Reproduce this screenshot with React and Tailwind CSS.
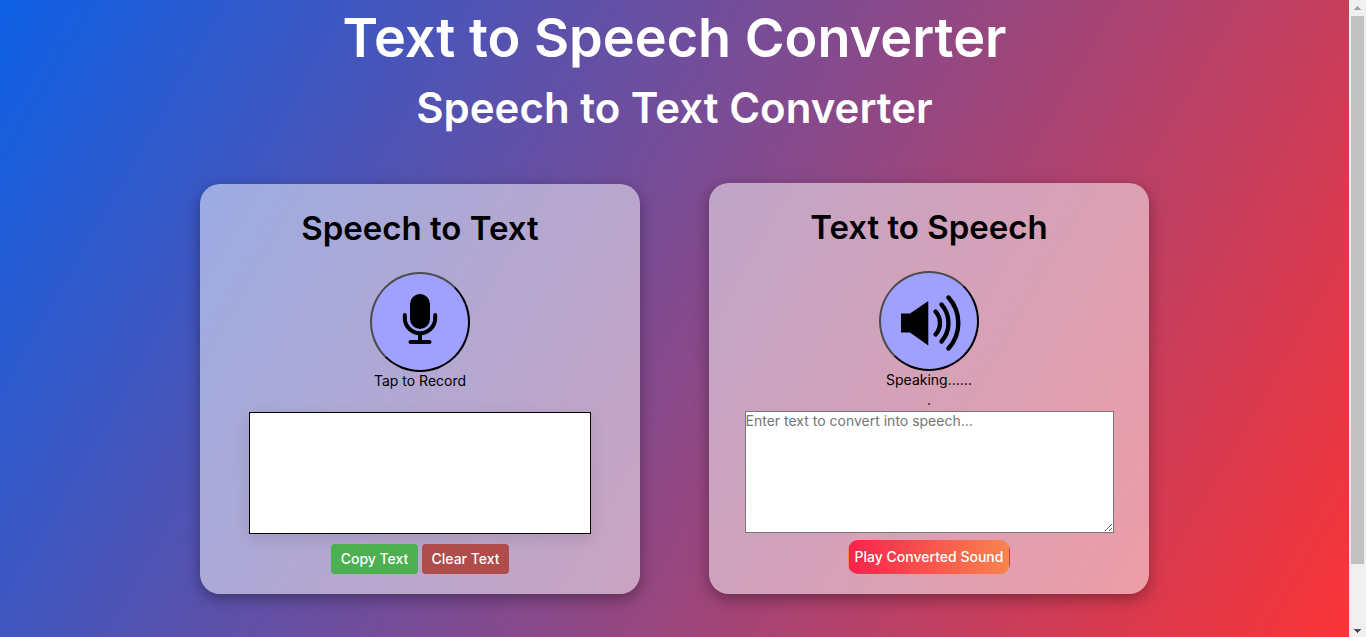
import React from "react";

function MicIcon() {
  return (
    <svg viewBox="0 0 36 52" className="h-[52px] w-9" fill="none" stroke="#000" strokeLinecap="round" aria-hidden="true">
      <rect x="8" y="1" width="20" height="35" rx="10" fill="#000" stroke="none" />
      <path d="M2.800 22v3a15.200 15.200 0 0 0 30.400 0v-3" strokeWidth="4" />
      <path d="M18 41v8" strokeWidth="4" strokeLinecap="butt" />
      <path d="M8.500 49h19" strokeWidth="4" />
    </svg>
  );
}

function SpeakerIcon() {
  return (
    <svg viewBox="0 0 62 56" className="h-14 w-[62px]" fill="none" stroke="#000" strokeWidth="4.400" strokeLinecap="round" aria-hidden="true">
      <path d="M1 18.500h9L28.300 6v44.500L10 37.500H1z" fill="#000" stroke="none" />
      <path d="M35.500 16.500a17 17 0 0 1 0 23" />
      <path d="M41.500 9.500a28 28 0 0 1 0 37" />
      <path d="M48.500 2.500a38 38 0 0 1 0 51" />
    </svg>
  );
}

function Card({ title, children }) {
  return (
    <section className="flex w-[440px] flex-col items-center rounded-[20px] bg-white/50 pb-5 shadow-[0_5px_15px_rgba(0,0,0,0.35)]">
      <h2 className="mt-5 text-[33px] leading-12 font-semibold">{title}</h2>
      {children}
    </section>
  );
}

const roundButton =
  "mt-5 flex size-[100px] items-center justify-center rounded-full border-2 border-t-[#4c4c4c] border-r-black border-b-black border-l-[#4c4c4c] bg-[#a0a0ff]";

export default function App() {
  return (
    <div className="flex h-screen overflow-hidden font-['Inter',sans-serif] text-black">
      <main className="flex-1 overflow-hidden bg-[linear-gradient(120deg,#0d60e5,#ff3333_102%)]">
        <header className="text-center font-semibold text-white">
          <h1 className="text-[54px] leading-[76px]">Text to Speech Converter</h1>
          <p className="text-[42px] leading-[64px]">Speech to Text Converter</p>
        </header>
        <div className="mt-[43px] flex items-end justify-center gap-[69px]">
          <Card title="Speech to Text">
            <button type="button" aria-label="Record" className={`${roundButton} pb-[6px]`}>
              <MicIcon />
            </button>
            <p className="text-sm leading-[18px]">Tap to Record</p>
            <div className="mt-[22px] h-[122px] w-[342px] border border-black bg-white shadow-[0_5px_15px_rgba(0,0,0,0.1)]" />
            <div className="mt-[10px] flex gap-1">
              <button type="button" className="h-[30px] w-[87px] rounded bg-[#4caf50] text-sm font-medium text-white">
                Copy Text
              </button>
              <button type="button" className="h-[30px] w-[87px] rounded bg-[#af4c4c] text-sm font-medium text-white">
                Clear Text
              </button>
            </div>
          </Card>
          <Card title="Text to Speech">
            <button type="button" aria-label="Speak" className={`${roundButton} pt-1 pl-1`}>
              <SpeakerIcon />
            </button>
            <p className="text-sm leading-[18px]">Speaking......</p>
            <p className="text-sm leading-[22px]">.</p>
            <textarea
              aria-label="Text to convert"
              placeholder="Enter text to convert into speech..."
              className="block h-[122px] w-[369px] resize border border-[#767676] bg-white text-sm leading-[18px] placeholder:text-[#757575]"
            />
            <button
              type="button"
              className="mt-[7px] h-[34px] rounded-[10px] border border-transparent bg-[linear-gradient(90deg,#f8234d,#f9844e)] px-[6px] text-sm font-medium text-white"
            >
              Play Converted Sound
            </button>
          </Card>
        </div>
      </main>
      <div aria-hidden="true" className="flex w-[17px] flex-col items-center bg-[#f0f0f0]">
        <svg viewBox="0 0 17 16" className="h-4 w-[17px] shrink-0" shapeRendering="crispEdges">
          <path d="M8 6h1v1h1v1h1v1h1v1H5V9h1V8h1V7h1z" fill="#a3a3a3" />
        </svg>
        <div className="w-[13px] grow-[548] bg-[#c1c1c1]" />
        <div className="grow-[57]" />
        <svg viewBox="0 0 17 16" className="h-4 w-[17px] shrink-0" shapeRendering="crispEdges">
          <path d="M5 8h7v1h-1v1h-1v1H9v1H8v-1H7v-1H6V9H5z" fill="#505050" />
        </svg>
      </div>
    </div>
  );
}
